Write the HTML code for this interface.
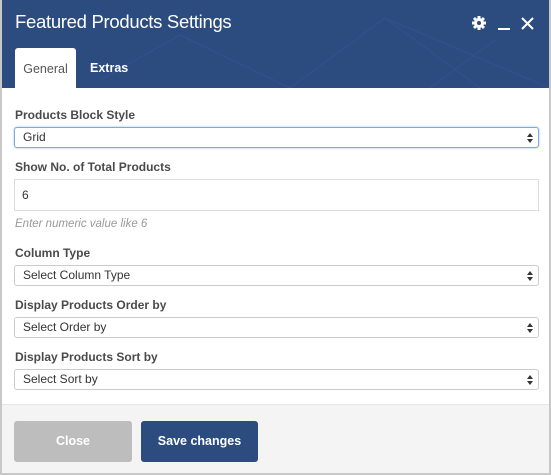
<!DOCTYPE html>
<html><head><meta charset="utf-8"><style>
*{box-sizing:border-box;margin:0;padding:0}
body{width:551px;height:475px;overflow:hidden;font-family:"Liberation Sans",sans-serif;background:#fff;position:relative}
.frame{position:absolute;inset:0;border:2px solid #c8c8c8;border-top:none}
.hdr{position:absolute;left:0;top:0;width:551px;height:88px;background:#2c4b7e;overflow:hidden}
.title{position:absolute;left:15px;top:11px;color:#fff;font-size:18.5px;letter-spacing:-0.3px}
.tab{position:absolute;left:15px;top:48px;width:61px;height:40px;background:#fff;border-radius:3px 3px 0 0;color:#555;font-size:12.5px;text-align:center;line-height:42px}
.tab2{position:absolute;left:90px;top:61px;color:#fff;font-size:12.5px;font-weight:bold}
.lbl{position:absolute;left:15px;font-size:12px;font-weight:bold;color:#4a4a4a}
.sel{position:absolute;left:14px;width:525px;height:21px;border:1px solid #ccc;border-radius:3px;font-size:12px;color:#333;padding-left:8px;line-height:19px;background:#fff}
.sel:after{content:"";position:absolute;right:5px;top:5px;width:0;height:0;border-left:3px solid transparent;border-right:3px solid transparent;border-bottom:4px solid #333}
.sel:before{content:"";position:absolute;right:5px;top:11px;width:0;height:0;border-left:3px solid transparent;border-right:3px solid transparent;border-top:4px solid #333}
.foot{position:absolute;left:0;top:404px;width:551px;height:71px;background:#f4f4f4;border-top:1px solid #e6e6e6}
.btn{position:absolute;top:421px;height:41px;border-radius:3px;color:#fff;font-size:12.5px;font-weight:bold;text-align:center;line-height:41px}
</style></head><body>
<div class="hdr">
<svg width="551" height="88" style="position:absolute;left:0;top:0" fill="none" stroke="#33528a" stroke-width="1"><path d="M180 35 L290 88 M385 18 L290 88 M100 80 L180 35 M385 18 L550 88 M385 18 L480 88 M430 88 L495 40"/></svg>
<div class="title">Featured Products Settings</div>
<svg width="16" height="16" viewBox="0 0 16 16" style="position:absolute;left:471px;top:15px"><circle cx="8" cy="8" r="5" fill="#fff"/><g stroke="#fff" stroke-width="3"><path d="M8 1v14M1 8h14M3 3l10 10M13 3L3 13"/></g><circle cx="8" cy="8" r="2" fill="#2c4b7e"/></svg>
<div style="position:absolute;left:498px;top:28px;width:12px;height:2px;background:#fff"></div>
<svg width="13" height="13" style="position:absolute;left:521px;top:17px"><path d="M1 1L12 12M12 1L1 12" stroke="#fff" stroke-width="2"/></svg>
<div class="tab">General</div>
<div class="tab2">Extras</div>
</div>
<div class="lbl" style="top:108px">Products Block Style</div>
<div class="sel" style="top:127px;border-color:#7fa9d6;box-shadow:0 0 2px #9cc0e6">Grid</div>
<div class="lbl" style="top:160px">Show No. of Total Products</div>
<div style="position:absolute;left:14px;top:179px;width:525px;height:32px;border:1px solid #ddd;font-size:12px;color:#333;padding-left:7px;line-height:31px">6</div>
<div style="position:absolute;left:15px;top:218px;font-size:11.5px;font-style:italic;color:#999">Enter numeric value like 6</div>
<div class="lbl" style="top:246px">Column Type</div>
<div class="sel" style="top:265px">Select Column Type</div>
<div class="lbl" style="top:298px">Display Products Order by</div>
<div class="sel" style="top:317px">Select Order by</div>
<div class="lbl" style="top:350px">Display Products Sort by</div>
<div class="sel" style="top:369px">Select Sort by</div>
<div class="foot"></div>
<div class="btn" style="left:14px;width:118px;background:#bdbdbd">Close</div>
<div class="btn" style="left:141px;width:117px;background:#2c4b7e">Save changes</div>
<div class="frame"></div>
</body></html>
